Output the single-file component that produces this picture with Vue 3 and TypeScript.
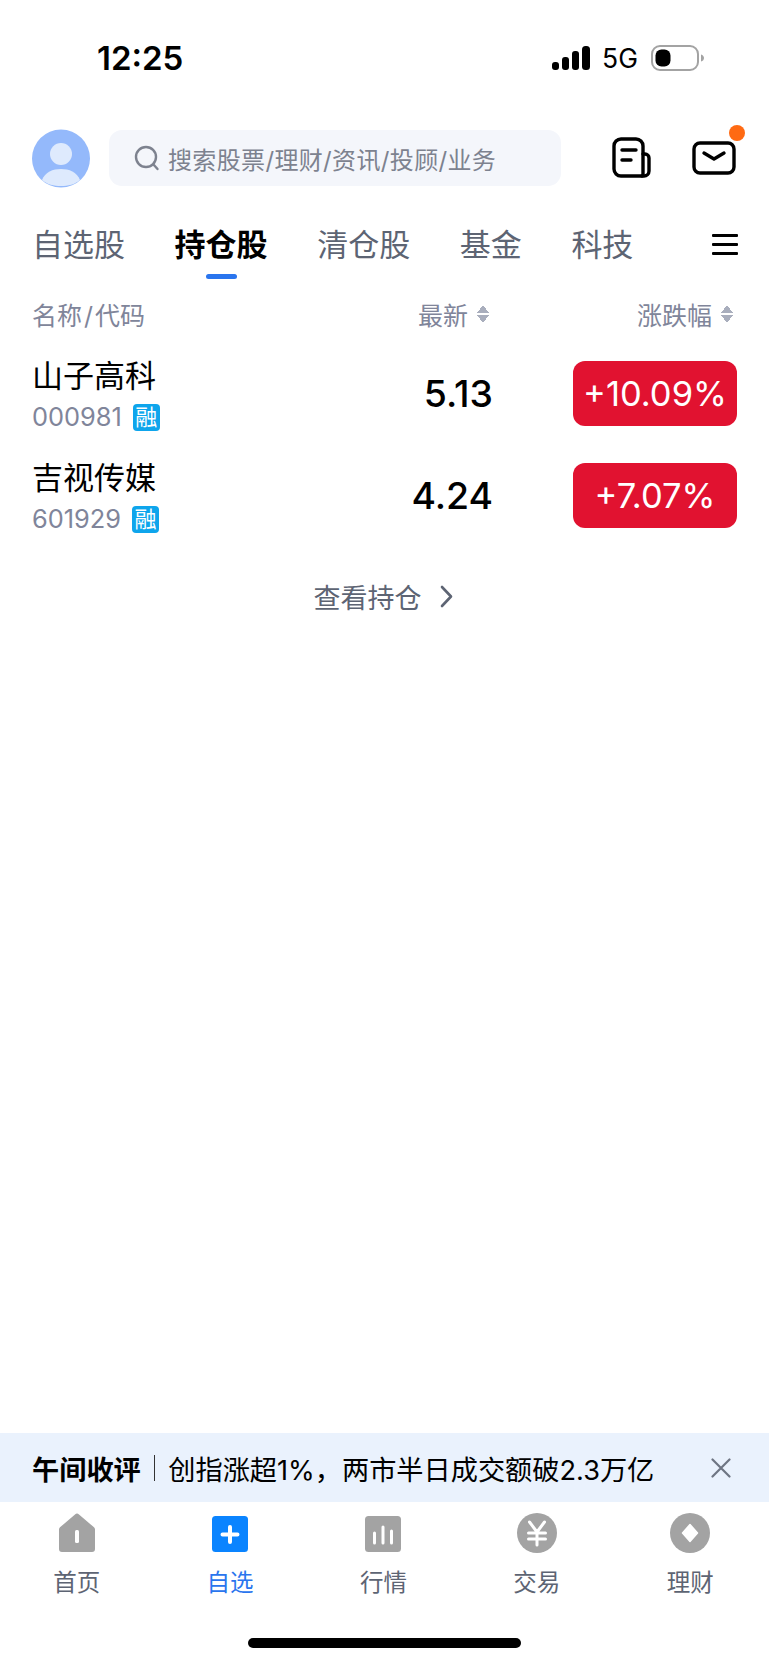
<script setup lang="ts">
interface Stock {
  name: string
  code: string
  price: string
  change: string
}

const tabs = ['自选股', '持仓股', '清仓股', '基金', '科技']

const stocks: Stock[] = [
  { name: '山子高科', code: '000981', price: '5.13', change: '+10.09%' },
  { name: '吉视传媒', code: '601929', price: '4.24', change: '+7.07%' },
]

const navItems = [
  { label: '首页', icon: 'home' },
  { label: '自选', icon: 'plus' },
  { label: '行情', icon: 'chart' },
  { label: '交易', icon: 'yen' },
  { label: '理财', icon: 'coin' },
]
</script>

<template>
  <div class="page">
    <div class="status-bar">
      <span class="time">12:25</span>
      <div class="status-right">
        <svg class="signal" width="38" height="24" viewBox="0 0 38 24">
          <rect x="0" y="16" width="7" height="8" rx="3" />
          <rect x="10" y="11" width="7" height="13" rx="3" />
          <rect x="20" y="5" width="7" height="19" rx="3" />
          <rect x="30" y="0" width="8" height="24" rx="3.5" />
        </svg>
        <span class="net">5G</span>
        <svg class="battery" width="53" height="26" viewBox="0 0 53 26">
          <rect x="1" y="1" width="46" height="24" rx="8" fill="none" stroke="#a3a3a3" stroke-width="2" />
          <rect x="4.500" y="4.500" width="15" height="17" rx="6" fill="#000" />
          <path d="M50 9.500c2 .5 3 2 3 3.500s-1 3-3 3.500z" fill="#a3a3a3" />
        </svg>
      </div>
    </div>

    <div class="top-row">
      <svg class="avatar" width="58" height="59" viewBox="0 0 58 59">
        <circle cx="29" cy="29.500" r="29" fill="#94b9fb" />
        <circle cx="29" cy="25" r="11" fill="#deeafd" />
        <path d="M10 51c3-8 11-11 19-11s16 3 19 11c-5 4.500-12 6-19 6s-14-1.500-19-6z" fill="#deeafd" />
      </svg>
      <div class="search">
        <svg width="26" height="26" viewBox="0 0 26 26" fill="none" stroke="#7d828f" stroke-width="2.400" stroke-linecap="round">
          <circle cx="12" cy="12" r="10" />
          <path d="M19.500 19.500l4 4.500" />
        </svg>
        <span>搜索股票/理财/资讯/投顾/业务</span>
      </div>
      <svg class="doc" width="40" height="42" viewBox="0 0 40 42" fill="none" stroke="#000" stroke-width="3.400" stroke-linecap="round" stroke-linejoin="round">
        <path d="M30 39H9a7 7 0 0 1-7-7V9a7 7 0 0 1 7-7h15a7 7 0 0 1 7 7v28" />
        <path d="M31 17h2a4 4 0 0 1 4 4v13a5 5 0 0 1-5 5h-2" />
        <path d="M10 13h14M10 23h9" />
      </svg>
      <div class="mail">
        <svg width="44" height="34" viewBox="0 0 44 34" fill="none" stroke="#000" stroke-width="3.400" stroke-linecap="round" stroke-linejoin="round">
          <rect x="2" y="2" width="40" height="30" rx="6" />
          <path d="M12 12l10 6 10-6" />
        </svg>
        <span class="dot"></span>
      </div>
    </div>

    <div class="tabs">
      <div v-for="(tab, i) in tabs" :key="tab" class="tab" :class="{ active: i === 1 }">{{ tab }}</div>
      <div class="menu"><span></span><span></span><span></span></div>
    </div>

    <div class="table-head">
      <span class="col-name">名称<span class="slash">/</span>代码</span>
      <span class="col-price">最新<i class="sort"></i></span>
      <span class="col-change">涨跌幅<i class="sort"></i></span>
    </div>

    <div class="rows">
      <div v-for="s in stocks" :key="s.code" class="row">
        <div class="col-name">
          <div class="name">{{ s.name }}</div>
          <div class="code">{{ s.code }}<span class="badge">融</span></div>
        </div>
        <div class="price">{{ s.price }}</div>
        <div class="pill">{{ s.change }}</div>
      </div>
    </div>

    <div class="more">
      查看持仓
      <svg width="13" height="23" viewBox="0 0 13 23" fill="none" stroke="#5d6473" stroke-width="2.600" stroke-linecap="round" stroke-linejoin="round">
        <path d="M2 2l9 9.500L2 21" />
      </svg>
    </div>

    <div class="banner">
      <div class="banner-text"><b>午间收评</b><i class="sep"></i>创指涨超1%，两市半日成交额破2.3万亿</div>
      <svg width="20" height="20" viewBox="0 0 20 20" stroke="#6e7583" stroke-width="2.200" stroke-linecap="round">
        <path d="M1.500 1.500l17 17M18.500 1.500l-17 17" />
      </svg>
    </div>

    <div class="nav">
      <div v-for="(item, i) in navItems" :key="item.label" class="nav-item" :class="{ current: i === 1 }">
        <svg width="40" height="40" viewBox="0 0 40 40">
          <template v-if="item.icon === 'home'">
            <path d="M2 16.500a3 3 0 0 1 1-2.200L18 1.500a3 3 0 0 1 4 0l15 12.800a3 3 0 0 1 1 2.200V36a3 3 0 0 1-3 3H5a3 3 0 0 1-3-3z" fill="#a3a3a3" />
            <rect x="18" y="17" width="4" height="13" rx="1.500" fill="#fff" />
          </template>
          <template v-else-if="item.icon === 'plus'">
            <rect x="2" y="3" width="36" height="36" rx="3.500" fill="#0a84ff" />
            <path d="M20 14v15M12.500 21.500h15" stroke="#fff" stroke-width="4" stroke-linecap="round" />
          </template>
          <template v-else-if="item.icon === 'chart'">
            <rect x="2" y="3" width="36" height="36" rx="3.500" fill="#a3a3a3" />
            <path d="M11.500 20v10M20 14v16M28.500 18v12" stroke="#fff" stroke-width="3" stroke-linecap="round" />
          </template>
          <template v-else-if="item.icon === 'yen'">
            <circle cx="20" cy="20" r="20" fill="#a3a3a3" />
            <path d="M12.500 9l7.500 10 7.500-10M11.500 20h17M11.500 26h17M20 19v13" stroke="#fff" stroke-width="3" fill="none" stroke-linecap="round" stroke-linejoin="round" />
          </template>
          <template v-else>
            <circle cx="20" cy="20" r="20" fill="#a3a3a3" />
            <path d="M20 11.500l7.500 8.500-7.500 8.500-7.500-8.500z" fill="#fff" stroke="#fff" stroke-width="1.500" stroke-linejoin="round" />
          </template>
        </svg>
        <span>{{ item.label }}</span>
      </div>
    </div>

    <div class="home-bar"><span></span></div>
  </div>
</template>

<style scoped>
.page {
  width: 769px;
  height: 1665px;
  display: flex;
  flex-direction: column;
  background: #fff;
  color: #000;
  overflow: hidden;
  font-family: Inter, 'Noto Sans CJK SC', sans-serif;
}

.status-bar {
  height: 116px;
  display: flex;
  align-items: center;
  justify-content: space-between;
  padding: 0 65px 0 97px;
  box-sizing: border-box;
}

.time {
  font-size: 33px;
  font-weight: 600;
}

.status-right {
  display: flex;
  align-items: center;
}

.net {
  font-size: 26.500px;
  margin: 0 13px 0 12px;
}

.signal {
  fill: #000;
}

.top-row {
  display: flex;
  align-items: center;
  height: 60px;
  padding-left: 32px;
  margin-top: 12px;
}

.avatar {
  flex: none;
}

.search {
  width: 452px;
  height: 56px;
  margin-left: 19px;
  padding-left: 25px;
  box-sizing: border-box;
  display: flex;
  align-items: center;
  gap: 8px;
  background: #f4f6fb;
  border-radius: 13px;
  color: #7d828f;
  font-size: 24px;
  letter-spacing: 0.35px;
}

.doc {
  margin-left: 51px;
  flex: none;
}

.mail {
  position: relative;
  margin-left: 40px;
  height: 34px;
}

.dot {
  position: absolute;
  top: -16px;
  right: -9px;
  width: 16px;
  height: 16px;
  border-radius: 50%;
  background: #ff6a13;
}

.tabs {
  display: flex;
  align-items: center;
  height: 56px;
  margin-top: 29px;
  padding-left: 32px;
  gap: 49.600px;
  position: relative;
}

.tab {
  font-size: 31px;
  color: #5d6473;
  position: relative;
  line-height: 56px;
}

.tab.active {
  color: #000;
  font-weight: 600;
}

.tab.active::after {
  content: '';
  position: absolute;
  left: 50%;
  bottom: -6px;
  width: 31px;
  height: 5px;
  margin-left: -15.500px;
  border-radius: 3px;
  background: #2a75ee;
}

.menu {
  position: absolute;
  right: 31px;
  top: 17px;
  width: 26px;
  display: flex;
  flex-direction: column;
  gap: 6px;
}

.menu span {
  height: 3px;
  background: #000;
  border-radius: 1px;
}

.table-head {
  display: flex;
  align-items: center;
  height: 40px;
  margin-top: 21px;
  padding: 0 36px 0 32px;
  font-size: 25px;
  color: #80859a;
}

.table-head .col-name {
  flex: 1;
}

.slash {
  margin: 0 2px;
}

.col-price,
.col-change {
  display: flex;
  align-items: center;
  gap: 9px;
}

.col-price {
  margin-right: 148px;
}

.sort {
  display: block;
  width: 12px;
  height: 18px;
  background:
    linear-gradient(to top left, #a9aebd 50%, transparent 50%) left top / 6px 8px no-repeat,
    linear-gradient(to top right, #a9aebd 50%, transparent 50%) right top / 6px 8px no-repeat,
    linear-gradient(to bottom left, #a9aebd 50%, transparent 50%) left bottom / 6px 8px no-repeat,
    linear-gradient(to bottom right, #a9aebd 50%, transparent 50%) right bottom / 6px 8px no-repeat;
}

.rows {
  display: flex;
  flex-direction: column;
  gap: 37px;
  margin-top: 27px;
  padding: 0 32px;
}

.row {
  display: flex;
  align-items: center;
  height: 65px;
}

.row .col-name {
  flex: 1;
  display: block;
}

.name {
  font-size: 31px;
  line-height: 40px;
}

.code {
  display: flex;
  align-items: center;
  margin-top: 7px;
  font-size: 25.400px;
  line-height: 28px;
  color: #80859a;
}

.badge {
  width: 27px;
  height: 27px;
  margin-left: 11px;
  border-radius: 4px;
  background: #0ea5ec;
  color: #fff;
  font-size: 22px;
  line-height: 27px;
  text-align: center;
}

.price {
  font-size: 37.400px;
  font-weight: 500;
  margin-right: 80px;
}

.pill {
  width: 164px;
  height: 65px;
  border-radius: 12px;
  background: #e11230;
  color: #fff;
  font-size: 34.500px;
  line-height: 65px;
  text-align: center;
}

.more {
  display: flex;
  align-items: center;
  justify-content: center;
  gap: 18px;
  margin-top: 48px;
  height: 40px;
  padding-right: 3px;
  font-size: 27px;
  color: #5d6473;
}

.banner {
  margin-top: auto;
  height: 69px;
  padding: 0 38px 0 32px;
  display: flex;
  align-items: center;
  justify-content: space-between;
  background: #eaf2fd;
}

.banner-text {
  display: flex;
  align-items: center;
  font-size: 27.200px;
}

.banner-text b {
  font-weight: 600;
}

.sep {
  width: 1.500px;
  height: 26px;
  margin: 0 13px;
  background: #333;
}

.nav {
  display: flex;
  padding-top: 11px;
  height: 105px;
  box-sizing: border-box;
}

.nav-item {
  width: 153.400px;
  display: flex;
  flex-direction: column;
  align-items: center;
  gap: 14px;
  font-size: 23.500px;
  color: #5d6473;
}

.nav-item span {
  line-height: 32px;
}

.nav-item.current span {
  color: #2a75ee;
}

.home-bar {
  height: 58px;
  display: flex;
  justify-content: center;
  padding-top: 31px;
  box-sizing: border-box;
}

.home-bar span {
  width: 273px;
  height: 10px;
  border-radius: 5px;
  background: #000;
}
</style>
